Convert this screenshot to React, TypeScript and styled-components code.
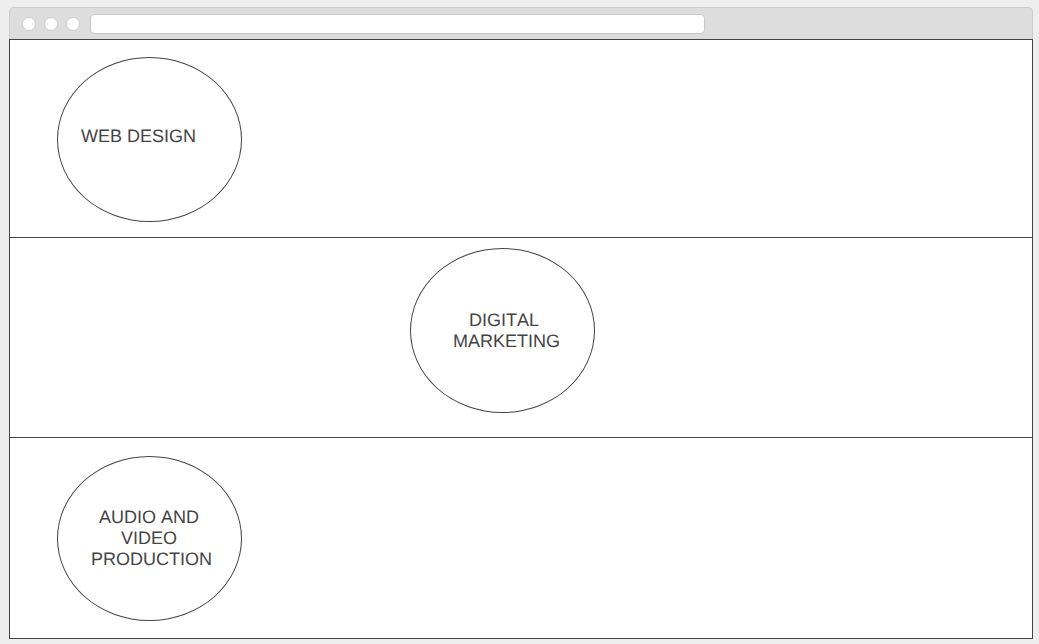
import React from "react";
import styled, { createGlobalStyle } from "styled-components";

const line = "#444444";

const GlobalStyle = createGlobalStyle`
  *, *::before, *::after { box-sizing: border-box; }
  body {
    margin: 0;
    background: #eeeeee;
    color: ${line};
    font-family: "Liberation Sans", Arial, sans-serif;
  }
`;

const Page = styled.div`
  padding: 7px 6px 5px 9px;
`;

const BrowserBar = styled.header`
  display: flex;
  align-items: center;
  height: 32px;
  padding: 0 12px;
  background: #dddddd;
  border: 1px solid #cccccc;
  border-bottom: 0;
  border-radius: 5px 5px 0 0;
`;

const WindowButtons = styled.div`
  display: flex;
  gap: 8px;
  margin-right: 10px;
`;

const WindowButton = styled.button`
  width: 14px;
  height: 14px;
  padding: 0;
  background: #ffffff;
  border: 1px solid #cccccc;
  border-radius: 50%;
`;

const AddressField = styled.input`
  flex: 1;
  min-width: 0;
  max-width: 615px;
  height: 20px;
  padding: 0 6px;
  background: #ffffff;
  border: 1px solid #c8c8c8;
  border-radius: 4px;
  font: inherit;
  font-size: 12px;
`;

const Content = styled.main`
  background: #ffffff;
  border: 1px solid ${line};
`;

const Band = styled.section<{ $pad: string; $centered?: boolean }>`
  display: flex;
  justify-content: ${(p) => (p.$centered ? "center" : "flex-start")};
  padding: ${(p) => p.$pad};

  & + & {
    border-top: 1px solid ${line};
  }
`;

const Circle = styled.div<{ $pad: string }>`
  display: flex;
  align-items: center;
  justify-content: center;
  flex: none;
  width: 185px;
  height: 165px;
  padding: ${(p) => p.$pad};
  border: 1px solid ${line};
  border-radius: 50%;
`;

const Title = styled.h2`
  margin: 0;
  font-size: 18px;
  font-weight: 400;
  line-height: 21px;
  text-align: center;
  text-rendering: geometricPrecision;
  font-kerning: none;
  white-space: pre;
`;

type Service = { title: string; band: string; circle: string; centered?: boolean };

const services: Service[] = [
  { title: "WEB DESIGN", band: "17px 47px 15px", circle: "0 22px 6px 0" },
  {
    title: "DIGITAL \nMARKETING",
    band: "10px 37px 24px 0",
    circle: "0 0 0 8px",
    centered: true,
  },
  { title: "AUDIO AND \nVIDEO \nPRODUCTION", band: "18px 47px 17px", circle: "0 0 0 4px" },
];

export default function App() {
  return (
    <>
      <GlobalStyle />
      <Page>
        <BrowserBar>
          <WindowButtons>
            <WindowButton type="button" aria-label="Close" />
            <WindowButton type="button" aria-label="Minimize" />
            <WindowButton type="button" aria-label="Maximize" />
          </WindowButtons>
          <AddressField type="text" aria-label="Address" />
        </BrowserBar>
        <Content>
          {services.map((s) => (
            <Band key={s.title} $pad={s.band} $centered={s.centered}>
              <Circle $pad={s.circle}>
                <Title>{s.title}</Title>
              </Circle>
            </Band>
          ))}
        </Content>
      </Page>
    </>
  );
}
